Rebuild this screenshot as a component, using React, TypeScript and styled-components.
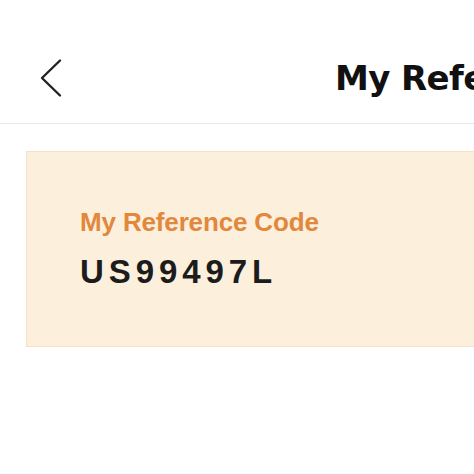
import React from 'react'
import styled, { createGlobalStyle } from 'styled-components'

const GlobalStyle = createGlobalStyle`
  html, body {
    margin: 0;
    padding: 0;
    background: #ffffff;
    font-family: "Liberation Sans", Arial, sans-serif;
    overflow: hidden;
  }
`

const Page = styled.div`
  width: 474px;
  height: 474px;
  overflow: hidden;
  background: #ffffff;
`

const Header = styled.header`
  height: 124px;
  display: flex;
  align-items: center;
  padding-top: 32px;
  border-bottom: 1px solid #e9e9e9;
  box-sizing: border-box;
  white-space: nowrap;
`

const BackButton = styled.button`
  width: 30px;
  height: 40px;
  margin-left: 36px;
  padding: 0;
  border: none;
  background: none;
  display: flex;
  align-items: center;
  justify-content: center;
`

const Title = styled.h1`
  margin: 0 0 0 269px;
  font-family: "DejaVu Sans", "Liberation Sans", sans-serif;
  font-size: 34px;
  font-weight: 700;
  color: #111111;
  letter-spacing: -0.6px;
`

const Card = styled.section`
  margin: 27px -60px 0 26px;
  height: 196px;
  background: #fcefdc;
  border: 1px solid #f4e2c8;
  box-sizing: border-box;
  padding: 55px 0 0 53px;
`

const Label = styled.div`
  font-size: 26px;
  font-weight: 700;
  color: #e1883d;
  line-height: 30px;
  letter-spacing: -0.15px;
`

const Code = styled.div`
  margin-top: 17px;
  font-size: 33px;
  font-weight: 700;
  color: #1c1c1c;
  letter-spacing: 4.9px;
  line-height: 36px;
`

export default function App() {
  return (
    <Page>
      <GlobalStyle />
      <Header>
        <BackButton aria-label="Back">
          <svg width="30" height="40" viewBox="0 0 30 40" fill="none">
            <path d="M24 2.5 L6 20 L24 37.5" stroke="#222" strokeWidth="2.4" strokeLinecap="round" strokeLinejoin="round" />
          </svg>
        </BackButton>
        <Title>My Reference Code</Title>
      </Header>
      <Card>
        <Label>My Reference Code</Label>
        <Code>US99497L</Code>
      </Card>
    </Page>
  )
}
